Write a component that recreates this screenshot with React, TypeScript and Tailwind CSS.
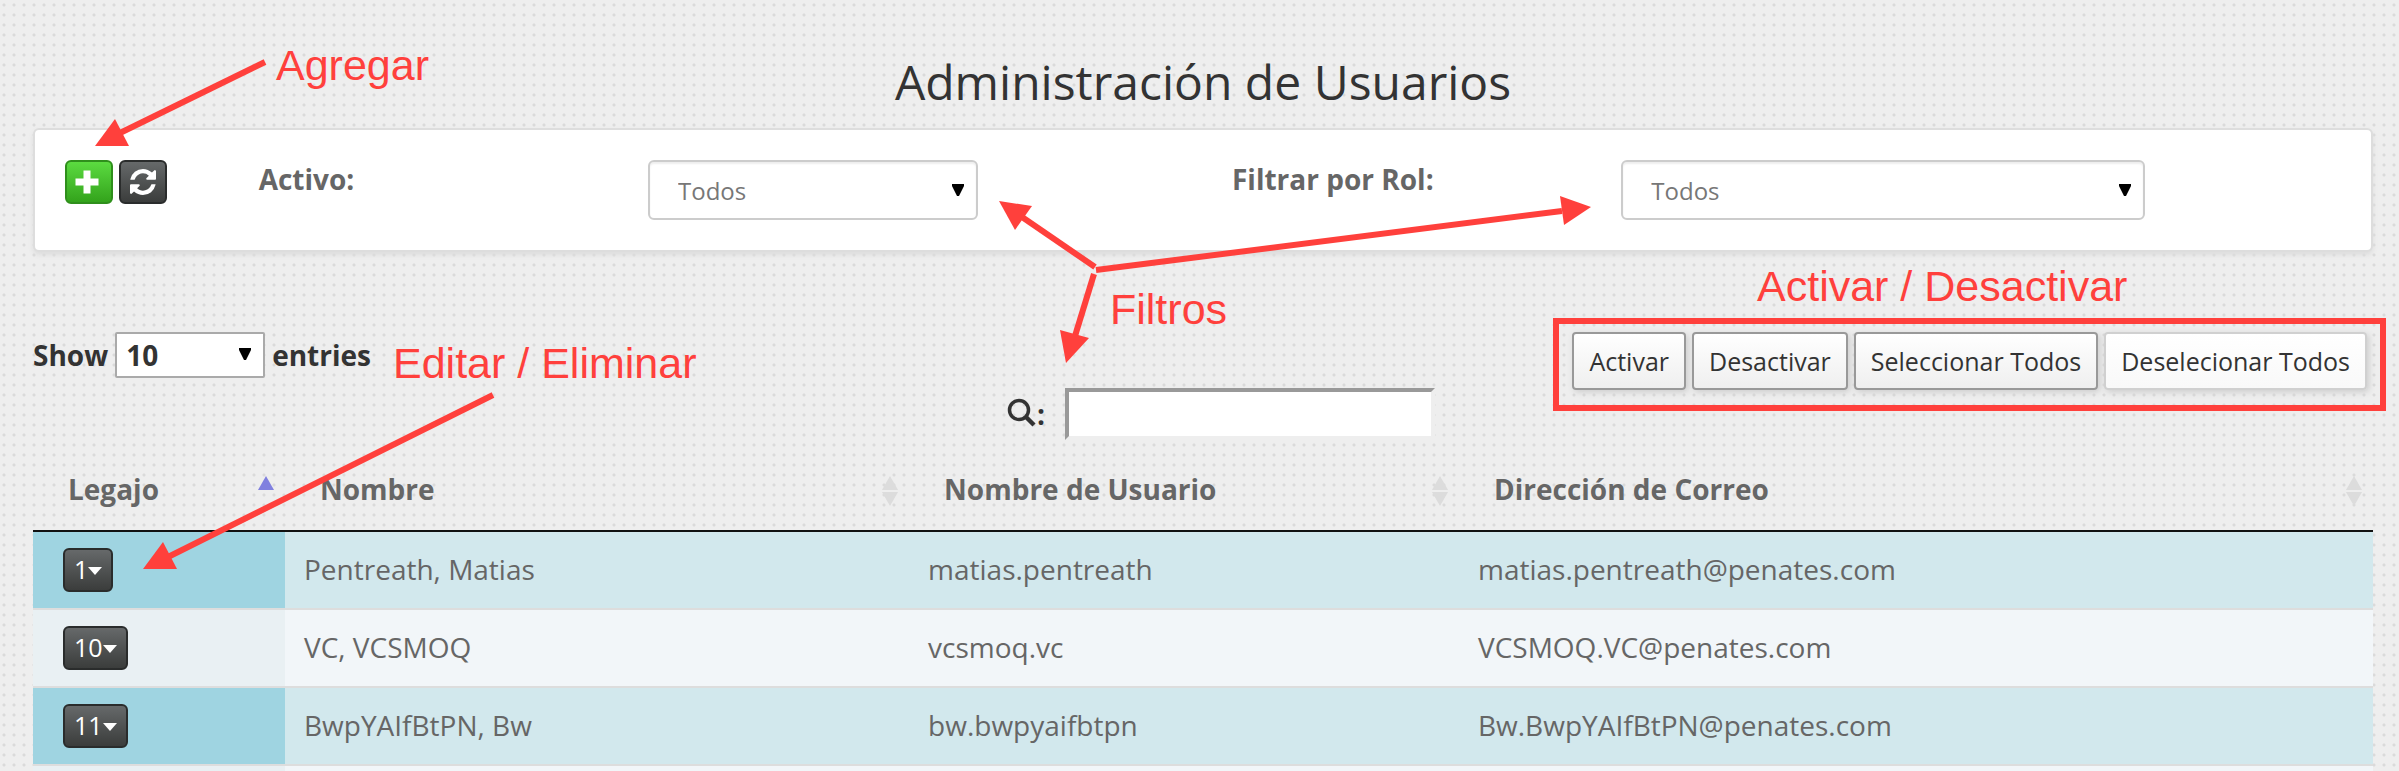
const users = [
  { legajo: "1", nombre: "Pentreath, Matias", usuario: "matias.pentreath", correo: "matias.pentreath@penates.com" },
  { legajo: "10", nombre: "VC, VCSMOQ", usuario: "vcsmoq.vc", correo: "VCSMOQ.VC@penates.com" },
  { legajo: "11", nombre: "BwpYAIfBtPN, Bw", usuario: "bw.bwpyaifbtpn", correo: "Bw.BwpYAIfBtPN@penates.com" },
];

const darkButton =
  "flex h-11 items-center justify-center rounded-md border-2 border-[#2a2c2c] bg-linear-to-b from-[#66696a] to-[#3b3d3c] text-white";

const lightButton =
  "rounded-sm border-2 px-[15px] whitespace-nowrap bg-linear-to-b from-white shadow-[2px_2px_6px_#ccc]";

function PlusIcon() {
  return (
    <svg className="mr-1" width="24" height="24" viewBox="0 0 24 24" aria-hidden="true">
      <path d="M8.5 0.500H15.500V8.500H23.500V15.500H15.500V23.500H8.500V15.500H0.500V8.500H8.500Z" fill="#fff" />
    </svg>
  );
}

function RefreshIcon() {
  return (
    <svg width="26" height="26" viewBox="0 128 1536 1536" aria-hidden="true">
      <path
        d="M1511 1056q0 5-1 7-64 268-268 434.500t-478 166.500q-146 0-282.500-55t-243.500-157l-129 129q-19 19-45 19t-45-19-19-45v-448q0-26 19-45t45-19h448q26 0 45 19t19 45-19 45l-137 137q71 66 161 102t187 36q134 0 250-65t186-179q11-17 53-117 8-23 30-23h192q13 0 22.500 9.500t9.500 22.500zm25-800v448q0 26-19 45t-45 19h-448q-26 0-45-19t-19-45 19-45l138-138q-148-137-349-137-134 0-250 65t-186 179q-11 17-53 117-8 23-30 23h-199q-13 0-22.500-9.500t-9.500-22.500v-7q65-268 270-434.500t480-166.500q146 0 284 55.500t245 156.500l130-129q19-19 45-19t45 19 19 45z"
        fill="#fff"
      />
    </svg>
  );
}

function SelectArrow({ className }: { className: string }) {
  return (
    <svg className={`pointer-events-none absolute ${className}`} width="12" height="12" viewBox="0 0 12 12" aria-hidden="true">
      <path d="M0 0H12V2L7 12H5L0 2Z" fill="#000" />
    </svg>
  );
}

function SortIcon({ active = false }: { active?: boolean }) {
  return (
    <svg className="mt-1 shrink-0" width="16" height="30" viewBox="0 0 16 30" aria-hidden="true">
      <path d="M8 0L16 14H0Z" fill={active ? "#8080df" : "#dcdcdc"} />
      {!active && <path d="M0 16H16L8 30Z" fill="#dcdcdc" />}
    </svg>
  );
}

function FilterSelect({ id, width }: { id: string; width: string }) {
  return (
    <div className={`relative ${width}`}>
      <select
        id={id}
        className="h-15 w-full appearance-none rounded-md border-2 border-[#ccc] bg-white pt-0.5 pl-7 text-2xl text-[#777] shadow-[inset_0_2px_2px_#eee]"
      >
        <option>Todos</option>
      </select>
      <SelectArrow className="top-6 right-3.5" />
    </div>
  );
}

function Header({ text, active }: { text: string; active?: boolean }) {
  return (
    <th scope="col" className="p-0 text-left font-bold">
      <div className="flex h-[78px] items-center justify-between pr-[11px] pb-1 pl-[35px]">
        {text}
        <SortIcon active={active} />
      </div>
    </th>
  );
}

function Note({ className, children }: { className: string; children: string }) {
  return (
    <span className={`absolute font-['Liberation_Sans',sans-serif] text-[43px] leading-[48px] whitespace-nowrap text-[#ff403c] ${className}`}>
      {children}
    </span>
  );
}

export default function App() {
  return (
    <div className="relative h-screen overflow-hidden bg-[#eee] bg-[radial-gradient(circle_at_4px_5px,#dadada_1px,transparent_2px)] bg-size-[10px_10px] pr-[26px] pl-[33px] font-['Open_Sans',sans-serif] text-[28px] leading-10 text-[#666]">
      <h1 className="pt-[49px] pb-[13px] text-center text-[48px] leading-[66px] font-normal text-[#333]">Administración de Usuarios</h1>

      <section className="grid h-[124px] grid-cols-12 rounded-md border-2 border-[#ddd] bg-white pt-[30px] shadow-[0_3px_5px_#ddd]">
        <div className="col-span-1 flex gap-1.5 pl-[30px]">
          <button type="button" aria-label="Agregar" className="flex h-11 w-12 items-center justify-center rounded-md border-2 border-[#2f8f1c] bg-linear-to-b from-[#5bdb40] to-[#33a31b] text-white">
            <PlusIcon />
          </button>
          <button type="button" aria-label="Recargar" className={`w-12 ${darkButton}`}>
            <RefreshIcon />
          </button>
        </div>
        <label htmlFor="activo" className="col-span-2 pl-[29px] leading-[38px] font-bold">Activo:</label>
        <div className="col-span-3 pl-[29px]">
          <FilterSelect id="activo" width="w-[330px]" />
        </div>
        <label htmlFor="rol" className="col-span-2 pl-[29px] leading-[38px] font-bold">Filtrar por Rol:</label>
        <div className="col-span-3 pr-[31px] pl-[29px]">
          <FilterSelect id="rol" width="w-full" />
        </div>
      </section>

      <div className="grid grid-cols-[1fr_auto_1fr] pt-20 text-[#333]">
        <label className="flex h-[46px] items-center gap-[7px] font-bold">
          Show
          <span className="relative">
            <select className="h-[46px] w-[150px] appearance-none rounded-xs border-2 border-[#aaa] bg-white pl-[9px] font-bold">
              <option>10</option>
            </select>
            <SelectArrow className="top-4 right-3.5" />
          </span>
          entries
        </label>
        <label className="mt-14 flex h-[52px] items-center justify-center pl-9 font-bold">
          <svg className="mb-0.5" width="30" height="30" viewBox="0 0 30 30" fill="none" stroke="#333" aria-hidden="true">
            <circle cx="12" cy="12" r="9.500" strokeWidth="3.500" />
            <path d="M19 19L27 27" strokeWidth="4.500" />
          </svg>
          :
          <input type="text" aria-label="Buscar" className="ml-5 h-[52px] w-[370px] border-4 border-t-[#999] border-r-[#eee] border-b-[#eee] border-l-[#999] bg-white px-2" />
        </label>
        <div className="flex justify-end">
          <div className="relative mr-1.5 flex h-[58px] gap-1.5 text-[25px]">
            <button type="button" className={`border-[#999] to-[#efefef] ${lightButton}`}>Activar</button>
            <button type="button" className={`border-[#999] to-[#efefef] ${lightButton}`}>Desactivar</button>
            <button type="button" className={`border-[#999] to-[#efefef] ${lightButton}`}>Seleccionar Todos</button>
            <button type="button" className={`border-[#d0d0d0] to-[#f9f9f9] ${lightButton}`}>Deselecionar Todos</button>
            <div className="pointer-events-none absolute -inset-x-[19px] -top-3.5 -bottom-[21px] border-6 border-[#ff403c]" />
          </div>
        </div>
      </div>

      <div className="pt-3">
        <table className="w-full table-fixed border-collapse">
          <colgroup>
            <col className="w-[10.77%]" />
            <col className="w-[26.67%]" />
            <col className="w-[23.5%]" />
            <col />
          </colgroup>
          <thead>
            <tr className="border-b-2 border-[#111]">
              <Header text="Legajo" active />
              <Header text="Nombre" />
              <Header text="Nombre de Usuario" />
              <Header text="Dirección de Correo" />
            </tr>
          </thead>
          <tbody>
            {users.map((user) => (
              <tr key={user.legajo} className="group h-[78px] border-b-2 border-[#ddd] odd:bg-[#d2e8ed] even:bg-[#f2f6f9]">
                <td className="pl-[30px] group-odd:bg-[#9fd4e1] group-even:bg-[#e9f0f3]">
                  <button type="button" className={`px-[9px] pb-0.5 text-[25px] font-medium ${darkButton}`}>
                    {user.legajo}
                    <svg className="mt-1" width="14" height="8" viewBox="0 0 14 8" aria-hidden="true">
                      <path d="M0 0H14L7 8Z" fill="#fff" />
                    </svg>
                  </button>
                </td>
                <td className="pb-0.5 pl-[19px]">{user.nombre}</td>
                <td className="pb-0.5 pl-[19px]">{user.usuario}</td>
                <td className="pb-0.5 pl-[19px]">{user.correo}</td>
              </tr>
            ))}
            <tr className="h-[78px] bg-[#f2f6f9]">
              <td className="bg-[#e9f0f3]" />
              <td />
              <td />
              <td />
            </tr>
          </tbody>
        </table>
      </div>

      <svg className="pointer-events-none absolute top-0 left-0" width="2399" height="771" viewBox="0 0 2399 771" aria-hidden="true">
        <g stroke="#ff403c" strokeWidth="6" fill="none">
          <path d="M265 62L120 133" />
          <path d="M1095 267L1022 217" />
          <path d="M1096 270L1562 211" />
          <path d="M1094 274L1075 336" />
          <path d="M493 395L168 557" />
        </g>
        <g fill="#ff403c">
          <path d="M95 146L115 119L129 146Z" />
          <path d="M999 201L1032 206L1015 230Z" />
          <path d="M1591 207L1560 196L1564 225Z" />
          <path d="M1066 363L1060 330L1089 338Z" />
          <path d="M143 569L163 542L177 569Z" />
        </g>
      </svg>
      <Note className="top-[41px] left-[276px]">Agregar</Note>
      <Note className="top-[339px] left-[393px]">Editar / Eliminar</Note>
      <Note className="top-[285px] left-[1110px]">Filtros</Note>
      <Note className="top-[262px] left-[1757px]">Activar / Desactivar</Note>
    </div>
  );
}
